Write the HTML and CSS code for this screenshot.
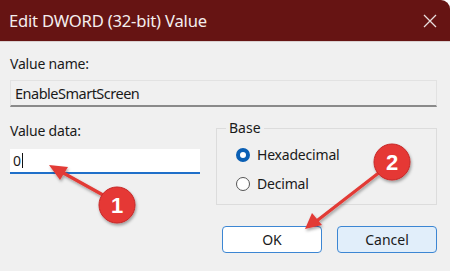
FILE: index.html
```html
<!DOCTYPE html>
<html>
<head>
<meta charset="utf-8">
<link rel="stylesheet" href="styles.css">
</head>
<body>
<div class="window">
  <div class="titlebar">
    <span class="title">Edit DWORD (32-bit) Value</span>
    <svg class="close" width="14" height="14" viewBox="0 0 14 14"><path d="M1 1L13 13M13 1L1 13" stroke="#e8dede" stroke-width="1.3"/></svg>
  </div>
  <div class="content">
    <div class="label name-label">Value name:</div>
    <div class="namefield">EnableSmartScreen</div>
    <div class="mid">
      <div class="left">
        <div class="label data-label">Value data:</div>
        <div class="datafield"><span>0</span><span class="caret"></span></div>
      </div>
      <div class="group">
        <div class="legend">Base</div>
        <div class="radio-row"><span class="radio on"></span><span class="rlabel">Hexadecimal</span></div>
        <div class="radio-row"><span class="radio"></span><span class="rlabel">Decimal</span></div>
      </div>
    </div>
    <div class="buttons">
      <div class="btn ok">OK</div>
      <div class="btn cancel">Cancel</div>
    </div>
  </div>
  <svg class="annot" width="450" height="271" viewBox="0 0 450 271">
    <defs>
      <filter id="sh" x="-50%" y="-50%" width="200%" height="200%">
        <feDropShadow dx="1" dy="2" stdDeviation="1.5" flood-color="#000" flood-opacity="0.35"/>
      </filter>
    </defs>
    <g filter="url(#sh)">
      <line x1="112" y1="200" x2="58" y2="170" stroke="#e23a36" stroke-width="3.2" stroke-linecap="round"/>
      <polygon points="49,165 68,167 60,180" fill="#e23a36"/>
      <circle cx="117" cy="205" r="18" fill="#e53935" stroke="#c62828" stroke-width="1"/>
      <line x1="385" y1="168" x2="314" y2="223" stroke="#e23a36" stroke-width="3.2" stroke-linecap="round"/>
      <polygon points="305,229 312,213 322,225" fill="#e23a36"/>
      <circle cx="392" cy="162" r="18" fill="#e53935" stroke="#c62828" stroke-width="1"/>
    </g>
    <text x="117" y="213" text-anchor="middle" class="num">1</text>
    <text x="392" y="170" text-anchor="middle" class="num">2</text>
  </svg>
</div>
</body>
</html>
```
FILE: styles.css
```css
html, body {
  margin: 0;
  padding: 0;
  background: #ffffff;
}
.window {
  position: relative;
  width: 450px;
  height: 271px;
  background: #f0f0f0;
  border-top-right-radius: 9px;
  overflow: hidden;
  font-family: "Noto Sans", "Liberation Sans", sans-serif;
  color: #1a1a1a;
}
.titlebar {
  height: 41px;
  background: #661413;
  border-bottom: 1px solid #d9d0d0;
  display: flex;
  align-items: center;
  justify-content: space-between;
  padding: 0 13px 0 9px;
}
.title {
  color: #f4eeee;
  font-size: 16.6px;
  letter-spacing: -0.2px;
}
.close {
  display: block;
  margin-top: 1px;
}
.content {
  padding: 0 13px 0 10px;
}
.label {
  font-size: 14px;
  letter-spacing: -0.2px;
  line-height: 16px;
}
.name-label {
  padding-top: 14px;
}
.namefield {
  margin-top: 8px;
  height: 24px;
  border: 1px solid #e2e2e2;
  border-bottom: 2px solid #8a8a8a;
  background: #f0f0f0;
  font-size: 14.5px;
  letter-spacing: -0.5px;
  line-height: 24px;
  padding-left: 4px;
  box-sizing: content-box;
}
.mid {
  display: flex;
  gap: 16px;
  margin-top: 14px;
}
.left {
  width: 190px;
  padding-top: 2px;
}
.datafield {
  margin-top: 10px;
  height: 23px;
  background: #ffffff;
  border-bottom: 2px solid #1f6fc9;
  font-size: 14px;
  line-height: 22px;
  padding-left: 3px;
  display: flex;
  align-items: center;
}
.caret {
  display: inline-block;
  width: 1px;
  height: 15px;
  background: #111;
  margin-left: 1px;
}
.group {
  flex: 1;
  position: relative;
  margin-top: 7px;
  height: 77px;
  box-sizing: border-box;
  border: 1px solid #dcdcdc;
  padding: 11px 0 0 19px;
}
.legend {
  position: absolute;
  top: -9px;
  left: 9px;
  background: #f0f0f0;
  padding: 0 3px;
  font-size: 14px;
  line-height: 16px;
}
.radio-row {
  display: flex;
  align-items: center;
  height: 29px;
  font-size: 14px;
  letter-spacing: -0.2px;
}
.radio {
  width: 14px;
  height: 14px;
  border-radius: 50%;
  border: 1px solid #555;
  background: #fff;
  box-sizing: border-box;
  margin-right: 7px;
}
.radio.on {
  border: 4px solid #0a5fb4;
  background: #fff;
}
.buttons {
  display: flex;
  justify-content: flex-end;
  gap: 15px;
  margin-top: 21px;
}
.btn {
  width: 98px;
  height: 25px;
  border: 1px solid #3c86d3;
  border-radius: 4px;
  font-size: 14px;
  line-height: 25px;
  text-align: center;
  color: #1a1a1a;
}
.ok {
  background: #ffffff;
}
.cancel {
  background: #e1eefa;
}
.annot {
  position: absolute;
  left: 0;
  top: 0;
  pointer-events: none;
}
.num {
  font-family: "Liberation Sans", Arial, sans-serif;
  font-weight: bold;
  font-size: 22px;
  fill: #ffffff;
}
```
